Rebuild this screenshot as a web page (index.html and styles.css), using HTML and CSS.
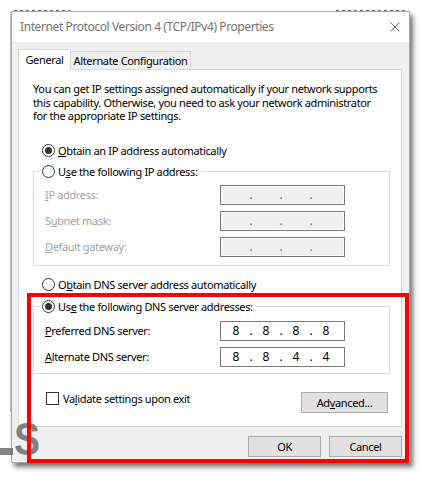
FILE: index.html
```html
<!DOCTYPE html>
<html lang="en">
<head>
<meta charset="utf-8">
<title>Internet Protocol Version 4 (TCP/IPv4) Properties</title>
<link rel="stylesheet" href="styles.css">
</head>
<body>
<div class="window">
  <div class="titlebar">
    <span class="title">Internet Protocol Version 4 (TCP/IPv4) Properties</span>
    <svg class="close" width="10" height="10" viewBox="0 0 10 10"><path d="M0.5 0.5L9.5 9.5M9.5 0.5L0.5 9.5" stroke="#6f6f6f" stroke-width="1" fill="none"/></svg>
  </div>
  <div class="client">
    <div class="tabs">
      <div class="tab active">General</div>
      <div class="tab alt">Alternate Configuration</div>
    </div>
    <div class="panel">
      <p class="intro">You can get IP settings assigned automatically if your network supports<br>this capability. Otherwise, you need to ask your network administrator<br>for the appropriate IP settings.</p>

      <div class="radio first"><span class="rb on"></span><span><u>O</u>btain an IP address automatically</span></div>

      <fieldset class="group ipgroup">
        <legend><span class="radio"><span class="rb"></span><span>U<u>s</u>e the following IP address:</span></span></legend>
        <div class="rows">
          <div class="row disabled"><span class="lbl"><u>I</u>P address:</span><span class="ipbox off"><span class="f"></span><span class="d">.</span><span class="f"></span><span class="d">.</span><span class="f"></span><span class="d">.</span><span class="f"></span></span></div>
          <div class="row disabled"><span class="lbl">S<u>u</u>bnet mask:</span><span class="ipbox off"><span class="f"></span><span class="d">.</span><span class="f"></span><span class="d">.</span><span class="f"></span><span class="d">.</span><span class="f"></span></span></div>
          <div class="row disabled"><span class="lbl"><u>D</u>efault gateway:</span><span class="ipbox off"><span class="f"></span><span class="d">.</span><span class="f"></span><span class="d">.</span><span class="f"></span><span class="d">.</span><span class="f"></span></span></div>
        </div>
      </fieldset>

      <div class="radio third"><span class="rb"></span><span>O<u>b</u>tain DNS server address automatically</span></div>

      <fieldset class="group dnsgroup">
        <legend><span class="radio"><span class="rb on"></span><span>Us<u>e</u> the following DNS server addresses:</span></span></legend>
        <div class="rows">
          <div class="row"><span class="lbl"><u>P</u>referred DNS server:</span><span class="ipbox"><span class="f">8</span><span class="d">.</span><span class="f">8</span><span class="d">.</span><span class="f">8</span><span class="d">.</span><span class="f">8</span></span></div>
          <div class="row"><span class="lbl"><u>A</u>lternate DNS server:</span><span class="ipbox"><span class="f">8</span><span class="d">.</span><span class="f">8</span><span class="d">.</span><span class="f">4</span><span class="d">.</span><span class="f">4</span></span></div>
        </div>
      </fieldset>

      <div class="bottomrow">
        <div class="check"><span class="cb"></span><span>Va<u>l</u>idate settings upon exit</span></div>
        <button class="btn adv">Ad<u>v</u>anced...</button>
      </div>
    </div>
    <div class="buttons">
      <button class="btn">OK</button>
      <button class="btn">Cancel</button>
    </div>
  </div>
</div>
<div class="watermark"><span class="dash"></span><span class="wm-s">S</span></div>
<div class="highlight"></div>
</body>
</html>
```
FILE: styles.css
```css
* { box-sizing: border-box; }
html, body { margin: 0; }
body {
  width: 421px;
  height: 477px;
  overflow: hidden;
  position: relative;
  padding: 11px 0 0 11px;
  background:
    linear-gradient(#c8c8c8, #c8c8c8) 10px 12px / 1px 400px no-repeat,
    repeating-linear-gradient(to right, #5a6a8a 0 3px, transparent 3px 6px) 14px 10px / 56px 1px no-repeat,
    repeating-linear-gradient(to right, #5a6a8a 0 3px, transparent 3px 6px) 336px 10px / 72px 1px no-repeat,
    #ffffff;
  font-family: "Noto Sans", "Open Sans", sans-serif;
  font-size: 11px;
  letter-spacing: -0.35px;
  color: #000;
}
u { text-decoration: underline; text-underline-offset: 1px; }

.window {
  width: 399px;
  height: 452px;
  border: 1px solid #a9a9a9;
  background: #f0f0f0;
  display: flex;
  flex-direction: column;
  box-shadow: 3px 4px 5px rgba(0, 0, 0, 0.55);
  position: relative;
}
.titlebar {
  height: 30px;
  background: #fff;
  display: flex;
  align-items: center;
  justify-content: space-between;
  padding: 0 9px 1px 8px;
  flex: none;
}
.title { color: #737373; font-size: 12px; line-height: 16px; letter-spacing: -0.4px; }
.close { display: block; }

.client {
  flex: 1;
  display: flex;
  flex-direction: column;
  padding: 7px 7px 0 6px;
}
.tabs {
  display: flex;
  align-items: flex-end;
  height: 20px;
  position: relative;
  z-index: 1;
  flex: none;
}
.tab {
  height: 18px;
  border: 1px solid #d9d9d9;
  border-bottom: none;
  background: #f0f0f0;
  text-align: center;
  line-height: 17px;
  white-space: nowrap;
}
.tab.active {
  width: 52px;
  height: 21px;
  line-height: 20px;
  background: #fff;
  margin-bottom: -1px;
  border-right: none;
}
.tab.alt { width: 121px; }

.panel {
  height: 358px;
  flex: none;
  background: #fff;
  border: 1px solid #d9d9d9;
  padding: 12px 11px 0 14px;
  display: flex;
  flex-direction: column;
}
.intro {
  margin: 0;
  line-height: 13.5px;
  white-space: nowrap;
}
.radio {
  display: flex;
  align-items: center;
  gap: 3px;
  height: 16px;
  line-height: 16px;
  white-space: nowrap;
}
.panel > .radio { margin-left: 9px; }
.radio.first { margin-top: 20px; }
.radio.third { margin-top: 11px; }
.rb {
  width: 13px;
  height: 13px;
  flex: none;
  border: 1px solid #333;
  border-radius: 50%;
  background: #fff;
  display: inline-flex;
  align-items: center;
  justify-content: center;
}
.rb.on::after {
  content: "";
  width: 7px;
  height: 7px;
  border-radius: 50%;
  background: #333;
}

.group {
  margin: 5px 0 0 0;
  padding: 5px 0 8px 8px;
  border: 1px solid #dcdcdc;
  min-width: 0;
}
.group legend {
  padding: 0 3px 0 0;
  margin: 0;
}
.dnsgroup { margin-top: 6px; padding-top: 6px; padding-bottom: 6px; }
.rows {
  display: flex;
  flex-direction: column;
  gap: 6px;
}
.row {
  display: flex;
  align-items: center;
  height: 20px;
  padding-left: 3px;
}
.lbl { width: 175px; flex: none; white-space: nowrap; }
.row.disabled .lbl { color: #a2a2a2; }
.ipbox {
  width: 125px;
  height: 20px;
  flex: none;
  border: 1px solid #7a7a7a;
  background: #fff;
  display: flex;
  align-items: center;
  padding-left: 4px;
  font-size: 12px;
  line-height: 18px;
  letter-spacing: 0;
}
.ipbox.off {
  background: #f0f0f0;
  box-shadow: inset 0 0 0 1px #fbfbfb;
  color: #6d6d6d;
}
.ipbox .f { width: 22px; text-align: center; }
.ipbox .d { width: 8px; text-align: center; }

.bottomrow {
  display: flex;
  align-items: flex-start;
  margin-top: 18px;
}
.check {
  display: flex;
  align-items: center;
  gap: 4px;
  margin-left: 13px;
  height: 13px;
  line-height: 13px;
  white-space: nowrap;
}
.cb {
  width: 13px;
  height: 13px;
  flex: none;
  border: 1px solid #333;
  background: #fff;
}
.btn {
  height: 21px;
  width: 73px;
  padding: 0;
  margin: 0;
  border: 1px solid #adadad;
  background: #e1e1e1;
  font-family: inherit;
  font-size: 11px;
  letter-spacing: -0.35px;
  color: #000;
  line-height: 19px;
}
.btn.adv {
  width: 87px;
  margin-left: auto;
  margin-right: 2px;
}
.buttons {
  display: flex;
  justify-content: flex-end;
  gap: 8px;
  margin-top: 9px;
  flex: none;
}

.watermark {
  position: absolute;
  left: 0;
  top: 420px;
  height: 40px;
  width: 44px;
  color: rgba(110, 110, 110, 0.85);
}
.dash {
  position: absolute;
  left: 0;
  top: 28px;
  width: 13px;
  height: 7px;
  background: rgba(110, 110, 110, 0.85);
}
.wm-s {
  position: absolute;
  left: 14px;
  top: -4px;
  font-family: "Liberation Sans", Arial, sans-serif;
  font-weight: bold;
  font-size: 46px;
  line-height: 46px;
  letter-spacing: 0;
  transform: scaleX(0.85);
  transform-origin: left top;
}
.highlight {
  position: absolute;
  left: 27px;
  top: 293px;
  width: 382px;
  height: 170px;
  border: 4px solid #ff0000;
}
```
